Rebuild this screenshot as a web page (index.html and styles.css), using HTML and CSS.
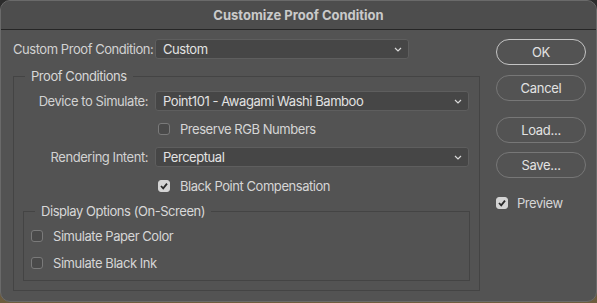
FILE: index.html
```html
<!DOCTYPE html>
<html>
<head lang="en">
  <meta charset="UTF-8">
  <title>Customize Proof Condition</title>
  <link rel="stylesheet" href="styles.css">
</head>
<body>
  <div class="window">
    <div class="titlebar">Customize Proof Condition</div>
    <div class="content">
      <div class="left">
        <div class="row top">
          <label class="lbl">Custom Proof Condition:</label>
          <div class="select sel-short">
            <span>Custom</span>
            <svg class="chev" width="8" height="5" viewBox="0 0 8 5"><polyline points="1,1 4,4 7,1" fill="none" stroke="#d8d8d8" stroke-width="1.2"/></svg>
          </div>
        </div>

        <fieldset class="group">
          <legend>Proof Conditions</legend>
          <div class="row first">
            <label class="lbl">Device to Simulate:</label>
            <div class="select sel-long">
              <span>Point101 - Awagami Washi Bamboo</span>
              <svg class="chev" width="8" height="5" viewBox="0 0 8 5"><polyline points="1,1 4,4 7,1" fill="none" stroke="#d8d8d8" stroke-width="1.2"/></svg>
            </div>
          </div>
          <div class="check indent gap8">
            <i class="box"></i><span>Preserve RGB Numbers</span>
          </div>
          <div class="row gap8">
            <label class="lbl">Rendering Intent:</label>
            <div class="select sel-long">
              <span>Perceptual</span>
              <svg class="chev" width="8" height="5" viewBox="0 0 8 5"><polyline points="1,1 4,4 7,1" fill="none" stroke="#d8d8d8" stroke-width="1.2"/></svg>
            </div>
          </div>
          <div class="check indent gap9">
            <i class="box on"><svg width="10" height="10" viewBox="0 0 10 10"><polyline points="2,5 4.2,7.3 8,2.6" fill="none" stroke="#2a2a2a" stroke-width="1.8"/></svg></i><span>Black Point Compensation</span>
          </div>

          <fieldset class="group inner">
            <legend>Display Options (On-Screen)</legend>
            <div class="check first">
              <i class="box"></i><span>Simulate Paper Color</span>
            </div>
            <div class="check gap7">
              <i class="box"></i><span>Simulate Black Ink</span>
            </div>
          </fieldset>
        </fieldset>
      </div>

      <div class="right">
        <button class="btn default">OK</button>
        <button class="btn b-cancel">Cancel</button>
        <button class="btn b-load">Load...</button>
        <button class="btn b-save">Save...</button>
        <div class="check preview">
          <i class="box on"><svg width="10" height="10" viewBox="0 0 10 10"><polyline points="2,5 4.2,7.3 8,2.6" fill="none" stroke="#2a2a2a" stroke-width="1.8"/></svg></i><span>Preview</span>
        </div>
      </div>
    </div>
  </div>
</body>
</html>
```

FILE: styles.css
```css
* {
  margin: 0;
  padding: 0;
  box-sizing: border-box;
}
html, body {
  width: 597px;
  height: 303px;
  overflow: hidden;
}
body {
  background: linear-gradient(#2c2c2c 0, #2c2c2c 55%, #6e5d3e 100%);
  font-family: Inter, "Liberation Sans", sans-serif;
  font-size: 13px;
  letter-spacing: -0.45px;
  color: #d6d6d6;
}
i {
  font-style: normal;
}

.window {
  width: 597px;
  height: 302px;
  border: 1px solid #6a6a6a;
  border-radius: 10px;
  background: #535353;
  overflow: hidden;
}
.titlebar {
  height: 29px;
  line-height: 28px;
  text-align: center;
  font-weight: 700;
  font-size: 13px;
  letter-spacing: 0;
  color: #cacaca;
  background: #4d4d4d;
  border-bottom: 1px solid #262626;
}
.content {
  display: flex;
  padding: 9px 10px 0 12px;
}
.left {
  width: 467px;
}
.right {
  margin-left: 16px;
  width: 90px;
  display: flex;
  flex-direction: column;
}

.row {
  display: flex;
  align-items: center;
  height: 20px;
}
.lbl {
  text-align: right;
  flex: none;
  white-space: nowrap;
  margin-right: 7px;
  color: #d2d2d2;
}
.top .lbl {
  width: 135px;
}
.group .lbl {
  width: 134px;
}

.select {
  height: 20px;
  display: flex;
  align-items: center;
  justify-content: space-between;
  padding: 0 6px 0 7px;
  background: #464646;
  border: 1px solid #5e5e5e;
  border-radius: 3px;
  color: #e2e2e2;
}
.sel-short {
  width: 254px;
}
.sel-long {
  width: 314px;
}
.chev {
  margin-top: 1px;
}

.group {
  margin-top: 9px;
  border: 1px solid #444444;
  padding: 0;
  height: 223px;
}
.group legend {
  margin-left: 11px;
  padding: 0 6px;
  line-height: 16px;
  color: #d8d8d8;
}
.group .first {
  margin-top: 7px;
}
.inner {
  margin: 7px 9px 0 9px;
  height: 78px;
}
.inner .check {
  padding-left: 7px;
}

.check {
  display: flex;
  align-items: center;
  height: 20px;
  white-space: nowrap;
}
.indent {
  padding-left: 144px;
}
.gap7 {
  margin-top: 7px;
}
.gap8 {
  margin-top: 8px;
}
.gap9 {
  margin-top: 9px;
}
.box {
  flex: none;
  width: 12px;
  height: 12px;
  border: 1px solid #7a7a7a;
  border-radius: 3px;
  background: #4a4a4a;
  margin-right: 10px;
  display: flex;
  align-items: center;
  justify-content: center;
}
.box.on {
  background: #d4d4d4;
  border-color: #d4d4d4;
}

.btn {
  width: 90px;
  height: 26px;
  border-radius: 13px;
  border: 1px solid #777777;
  background: transparent;
  font-family: Inter, "Liberation Sans", sans-serif;
  font-size: 13px;
  letter-spacing: -0.3px;
  color: #e2e2e2;
}
.btn.default {
  border-color: #c4c4c4;
}
.b-cancel {
  margin-top: 10px;
}
.b-load {
  margin-top: 16px;
}
.b-save {
  margin-top: 9px;
}
.preview {
  margin-top: 15px;
}
.preview .box {
  margin-right: 9px;
}
```
